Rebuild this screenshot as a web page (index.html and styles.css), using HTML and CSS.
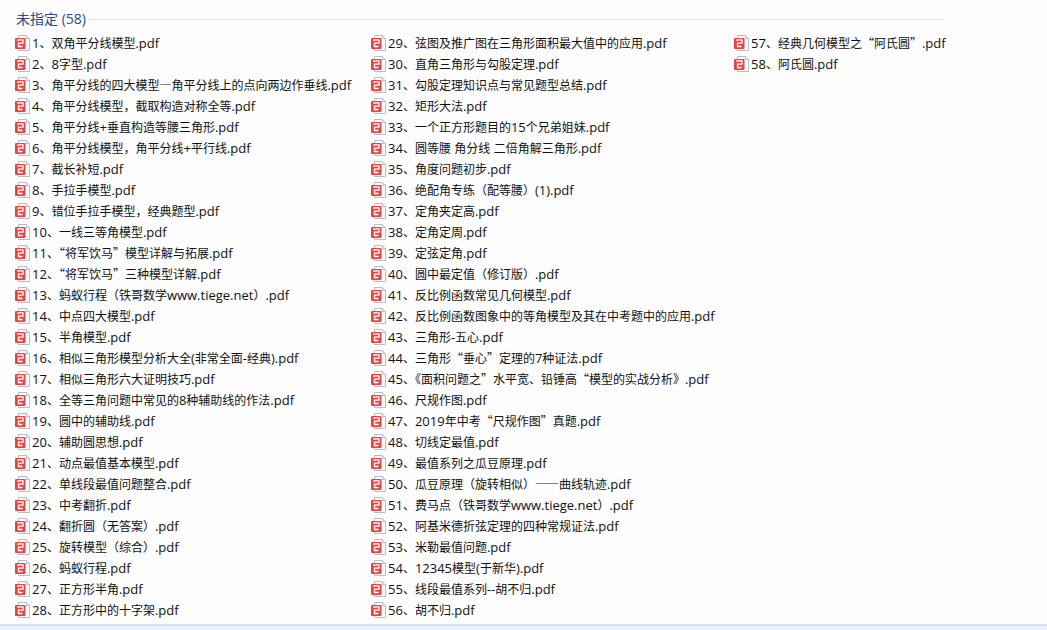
FILE: index.html
```html
<!DOCTYPE html>
<html lang="zh">
<head>
<meta charset="utf-8">
<title>未指定</title>
<link rel="stylesheet" href="styles.css">
</head>
<body>
<svg class="defs" width="0" height="0" aria-hidden="true">
<symbol id="pdf" viewBox="0 0 16 16">
<path d="M3.5 .5H11.5L14.5 3.5V15.5H3.5Z" fill="#fff" stroke="#b9bcc4"/>
<path d="M11.5 .5V3.5H14.5" fill="#f0f1f4" stroke="#b9bcc4"/>
<rect x="0" y="3" width="10.5" height="11" rx="1" fill="#ea4440"/>
<path d="M3 6V4.8H8V8.2H3.5V11.5H7.5" fill="none" stroke="#fff" stroke-width="1.3"/>
</symbol>
</svg>
<main class="panel">
<header class="head"><h1>未指定 (58)</h1><span class="rule"></span></header>
<div class="cols">
<ul class="col c1">
<li><svg><use href="#pdf"/></svg><b>1</b>、双角平分线模型<b>.pdf</b></li>
<li><svg><use href="#pdf"/></svg><b>2</b>、<b>8</b>字型<b>.pdf</b></li>
<li><svg><use href="#pdf"/></svg><b>3</b>、角平分线的四大模型—角平分线上的点向两边作垂线<b>.pdf</b></li>
<li><svg><use href="#pdf"/></svg><b>4</b>、角平分线模型，截取构造对称全等<b>.pdf</b></li>
<li><svg><use href="#pdf"/></svg><b>5</b>、角平分线<b>+</b>垂直构造等腰三角形<b>.pdf</b></li>
<li><svg><use href="#pdf"/></svg><b>6</b>、角平分线模型，角平分线<b>+</b>平行线<b>.pdf</b></li>
<li><svg><use href="#pdf"/></svg><b>7</b>、截长补短<b>.pdf</b></li>
<li><svg><use href="#pdf"/></svg><b>8</b>、手拉手模型<b>.pdf</b></li>
<li><svg><use href="#pdf"/></svg><b>9</b>、错位手拉手模型，经典题型<b>.pdf</b></li>
<li><svg><use href="#pdf"/></svg><b>10</b>、一线三等角模型<b>.pdf</b></li>
<li><svg><use href="#pdf"/></svg><b>11</b>、“将军饮马”模型详解与拓展<b>.pdf</b></li>
<li><svg><use href="#pdf"/></svg><b>12</b>、“将军饮马”三种模型详解<b>.pdf</b></li>
<li><svg><use href="#pdf"/></svg><b>13</b>、蚂蚁行程（铁哥数学<b>www.tiege.net</b>）<b>.pdf</b></li>
<li><svg><use href="#pdf"/></svg><b>14</b>、中点四大模型<b>.pdf</b></li>
<li><svg><use href="#pdf"/></svg><b>15</b>、半角模型<b>.pdf</b></li>
<li><svg><use href="#pdf"/></svg><b>16</b>、相似三角形模型分析大全<b>(</b>非常全面<b>-</b>经典<b>).pdf</b></li>
<li><svg><use href="#pdf"/></svg><b>17</b>、相似三角形六大证明技巧<b>.pdf</b></li>
<li><svg><use href="#pdf"/></svg><b>18</b>、全等三角问题中常见的<b>8</b>种辅助线的作法<b>.pdf</b></li>
<li><svg><use href="#pdf"/></svg><b>19</b>、圆中的辅助线<b>.pdf</b></li>
<li><svg><use href="#pdf"/></svg><b>20</b>、辅助圆思想<b>.pdf</b></li>
<li><svg><use href="#pdf"/></svg><b>21</b>、动点最值基本模型<b>.pdf</b></li>
<li><svg><use href="#pdf"/></svg><b>22</b>、单线段最值问题整合<b>.pdf</b></li>
<li><svg><use href="#pdf"/></svg><b>23</b>、中考翻折<b>.pdf</b></li>
<li><svg><use href="#pdf"/></svg><b>24</b>、翻折圆（无答案）<b>.pdf</b></li>
<li><svg><use href="#pdf"/></svg><b>25</b>、旋转模型（综合）<b>.pdf</b></li>
<li><svg><use href="#pdf"/></svg><b>26</b>、蚂蚁行程<b>.pdf</b></li>
<li><svg><use href="#pdf"/></svg><b>27</b>、正方形半角<b>.pdf</b></li>
<li><svg><use href="#pdf"/></svg><b>28</b>、正方形中的十字架<b>.pdf</b></li>
</ul>
<ul class="col c2">
<li><svg><use href="#pdf"/></svg><b>29</b>、弦图及推广图在三角形面积最大值中的应用<b>.pdf</b></li>
<li><svg><use href="#pdf"/></svg><b>30</b>、直角三角形与勾股定理<b>.pdf</b></li>
<li><svg><use href="#pdf"/></svg><b>31</b>、勾股定理知识点与常见题型总结<b>.pdf</b></li>
<li><svg><use href="#pdf"/></svg><b>32</b>、矩形大法<b>.pdf</b></li>
<li><svg><use href="#pdf"/></svg><b>33</b>、一个正方形题目的<b>15</b>个兄弟姐妹<b>.pdf</b></li>
<li><svg><use href="#pdf"/></svg><b>34</b>、圆等腰<b> </b>角分线<b> </b>二倍角解三角形<b>.pdf</b></li>
<li><svg><use href="#pdf"/></svg><b>35</b>、角度问题初步<b>.pdf</b></li>
<li><svg><use href="#pdf"/></svg><b>36</b>、绝配角专练（配等腰）<b>(1).pdf</b></li>
<li><svg><use href="#pdf"/></svg><b>37</b>、定角夹定高<b>.pdf</b></li>
<li><svg><use href="#pdf"/></svg><b>38</b>、定角定周<b>.pdf</b></li>
<li><svg><use href="#pdf"/></svg><b>39</b>、定弦定角<b>.pdf</b></li>
<li><svg><use href="#pdf"/></svg><b>40</b>、圆中最定值（修订版）<b>.pdf</b></li>
<li><svg><use href="#pdf"/></svg><b>41</b>、反比例函数常见几何模型<b>.pdf</b></li>
<li><svg><use href="#pdf"/></svg><b>42</b>、反比例函数图象中的等角模型及其在中考题中的应用<b>.pdf</b></li>
<li><svg><use href="#pdf"/></svg><b>43</b>、三角形<b>-</b>五心<b>.pdf</b></li>
<li><svg><use href="#pdf"/></svg><b>44</b>、三角形“垂心”定理的<b>7</b>种证法<b>.pdf</b></li>
<li><svg><use href="#pdf"/></svg><b>45</b>、《面积问题之”水平宽、铅锤高“模型的实战分析》<b>.pdf</b></li>
<li><svg><use href="#pdf"/></svg><b>46</b>、尺规作图<b>.pdf</b></li>
<li><svg><use href="#pdf"/></svg><b>47</b>、<b>2019</b>年中考“尺规作图”真题<b>.pdf</b></li>
<li><svg><use href="#pdf"/></svg><b>48</b>、切线定最值<b>.pdf</b></li>
<li><svg><use href="#pdf"/></svg><b>49</b>、最值系列之瓜豆原理<b>.pdf</b></li>
<li><svg><use href="#pdf"/></svg><b>50</b>、瓜豆原理（旋转相似）——曲线轨迹<b>.pdf</b></li>
<li><svg><use href="#pdf"/></svg><b>51</b>、费马点（铁哥数学<b>www.tiege.net</b>）<b>.pdf</b></li>
<li><svg><use href="#pdf"/></svg><b>52</b>、阿基米德折弦定理的四种常规证法<b>.pdf</b></li>
<li><svg><use href="#pdf"/></svg><b>53</b>、米勒最值问题<b>.pdf</b></li>
<li><svg><use href="#pdf"/></svg><b>54</b>、<b>12345</b>模型<b>(</b>于新华<b>).pdf</b></li>
<li><svg><use href="#pdf"/></svg><b>55</b>、线段最值系列<b>--</b>胡不归<b>.pdf</b></li>
<li><svg><use href="#pdf"/></svg><b>56</b>、胡不归<b>.pdf</b></li>
</ul>
<ul class="col c3">
<li><svg><use href="#pdf"/></svg><b>57</b>、经典几何模型之“阿氏圆”<b>.pdf</b></li>
<li><svg><use href="#pdf"/></svg><b>58</b>、阿氏圆<b>.pdf</b></li>
</ul>
</div>
</main>
<div class="foot"></div>
</body>
</html>
```
FILE: styles.css
```css
* { box-sizing: border-box; }
html, body { margin: 0; padding: 0; }
body { width: 1047px; height: 630px; overflow: hidden; background: #fdfdfd; display: flex; flex-direction: column; font-family: "Noto Sans CJK SC", sans-serif; color: #111; }
.defs { position: absolute; }
.panel { flex: 1; padding: 10px 0 0 16px; }
.head { display: flex; align-items: center; gap: 3px; width: 927px; height: 18px; }
.head h1 { margin: 0; font-size: 14px; font-weight: 400; color: #2b4b8f; white-space: nowrap; line-height: 18px; }
.head h1 { font-family: "Open Sans", "Noto Sans CJK SC", sans-serif; }
.rule { flex: 1; height: 1px; background: #e2e3e6; }
.cols { display: flex; padding-top: 4px; margin-left: -1px; }
.col { list-style: none; margin: 0; padding: 0; }
.c1 { width: 356px; }
.c2 { width: 363px; }
.col li { display: flex; align-items: center; height: 21px; font-size: 12px; white-space: pre; }
.col b { font-family: "Open Sans", sans-serif; font-weight: 400; font-size: 13px; white-space: pre; }
.col svg { width: 16px; height: 16px; margin-right: 1px; flex: none; }
.foot { height: 6px; background: #edf1f9; border-top: 2px solid #d4dff0; }
```
